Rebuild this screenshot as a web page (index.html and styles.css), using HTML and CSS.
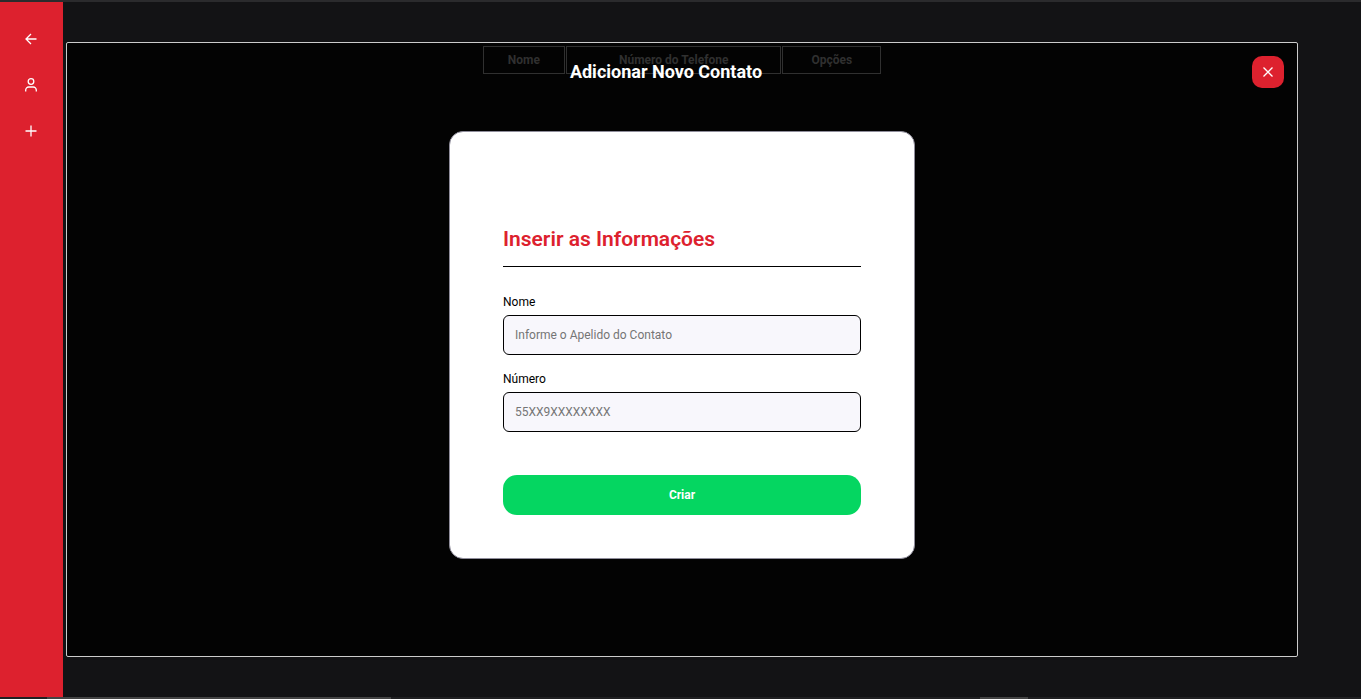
FILE: index.html
```html
<!DOCTYPE html>
<html lang="pt-BR">
<head>
<meta charset="utf-8">
<title>Adicionar Novo Contato</title>
<link rel="stylesheet" href="styles.css">
</head>
<body>
<div class="window-edge"></div>
<div class="app">
  <nav class="sidebar">
    <button class="nav-button" type="button" aria-label="Voltar">
      <svg class="icon" viewBox="0 0 16 16"><path d="M13.500 8H3M8 3 3 8l5 5"/></svg>
    </button>
    <button class="nav-button" type="button" aria-label="Perfil">
      <svg class="icon" viewBox="0 0 16 16"><circle cx="8" cy="4.500" r="2.800"/><path d="M2.700 14.500V13a3 3 0 0 1 3-3h4.600a3 3 0 0 1 3 3v1.500"/></svg>
    </button>
    <button class="nav-button" type="button" aria-label="Adicionar">
      <svg class="icon" viewBox="0 0 16 16"><path d="M8 2.500v11M2.500 8h11"/></svg>
    </button>
  </nav>
  <main class="content">
    <section class="panel">
      <table class="contacts">
        <thead><tr><th>Nome</th><th>Número do Telefone</th><th>Opções</th></tr></thead>
      </table>
      <div class="modal" role="dialog" aria-labelledby="modal-title">
        <header class="modal-header">
          <h1 class="modal-title" id="modal-title">Adicionar Novo Contato</h1>
          <button class="close" type="button" aria-label="Fechar">
            <svg class="icon" viewBox="0 0 16 16"><path d="m3.500 3.500 9 9M12.500 3.500l-9 9"/></svg>
          </button>
        </header>
        <form class="card">
          <h2 class="card-title">Inserir as Informações</h2>
          <label class="label" for="name">Nome</label>
          <input class="input" id="name" type="text" placeholder="Informe o Apelido do Contato">
          <label class="label" for="number">Número</label>
          <input class="input" id="number" type="tel" placeholder="55XX9XXXXXXXX">
          <button class="submit" type="submit">Criar</button>
        </form>
      </div>
    </section>
  </main>
</div>
<div class="taskbar"><span class="task task-wide"></span><span class="task task-short"></span></div>
</body>
</html>
```
FILE: styles.css
```css
* {
  box-sizing: border-box;
}

body {
  margin: 0;
  min-height: 100vh;
  display: flex;
  flex-direction: column;
  background: #131315;
  font-family: Roboto, "Liberation Sans", sans-serif;
  font-size: 12px;
}

button,
input {
  font: inherit;
}

.window-edge {
  height: 2px;
  background: #2b2b2d;
}

.app {
  flex: 1;
  display: flex;
}

.sidebar {
  width: 63px;
  padding: 21px 0 0 15px;
  display: flex;
  flex-direction: column;
  align-items: flex-start;
  gap: 14px;
  background: #dd212e;
}

.nav-button {
  width: 32px;
  height: 32px;
  padding: 0;
  border: 0;
  background: none;
  display: grid;
  place-items: center;
}

.icon {
  width: 16px;
  height: 16px;
  fill: none;
  stroke: #fff;
  stroke-width: 1.3;
}

.content {
  flex: 1;
  display: flex;
  padding: 40px 63px 40px 3px;
}

.panel {
  flex: 1;
  position: relative;
  padding: 2px;
  border: 1px solid #ccc;
  border-radius: 2px;
  background: #030303;
}

.contacts {
  margin: 0 auto;
  border-spacing: 1px;
  color: #303030;
}

.contacts th {
  height: 28px;
  padding: 0 24px;
  border: 1px solid #303030;
}

.contacts th:nth-child(2) {
  padding: 0 52px;
}

.contacts th:nth-child(3) {
  padding: 0 28px;
}

.modal {
  position: absolute;
  inset: 0;
  padding: 13px;
  display: flex;
  flex-direction: column;
  align-items: center;
  gap: 43px;
}

.modal-header {
  width: 100%;
  display: flex;
  align-items: center;
}

.modal-title {
  flex: 1;
  margin: 0;
  color: #fff;
  font-size: 18px;
  line-height: 24px;
  text-align: center;
}

.close {
  width: 32px;
  height: 32px;
  padding: 0;
  display: grid;
  place-items: center;
  border: 0;
  border-radius: 10px;
  background: #dd212e;
}

.card {
  width: 100%;
  max-width: 466px;
  padding: 94px 53px 43px;
  display: flex;
  flex-direction: column;
  border: 1px solid #8f8d9b;
  border-radius: 14px;
  background: #fff;
}

.card-title {
  margin: 0 0 27px;
  padding-bottom: 13px;
  border-bottom: 1px solid #000;
  color: #dd212e;
  font-size: 21px;
  font-weight: 600;
  line-height: 27px;
}

.label {
  margin-bottom: 5px;
  color: #000;
  line-height: 16px;
}

.input {
  height: 40px;
  margin-bottom: 16px;
  padding: 0 11px;
  border: 1px solid #000;
  border-radius: 6px;
  background: #f8f7fc;
}

.input::placeholder {
  color: #757575;
}

.submit {
  height: 40px;
  margin-top: 27px;
  border: 0;
  border-radius: 14px;
  background: #05d661;
  color: #fff;
  font-weight: 700;
}

.taskbar {
  height: 2px;
  display: grid;
  grid-template-columns: 47fr 344fr 589fr 48fr 333fr;
  background: #202022;
}

.task {
  background: #444;
}

.task-wide {
  grid-column: 2;
}

.task-short {
  grid-column: 4;
}
```
